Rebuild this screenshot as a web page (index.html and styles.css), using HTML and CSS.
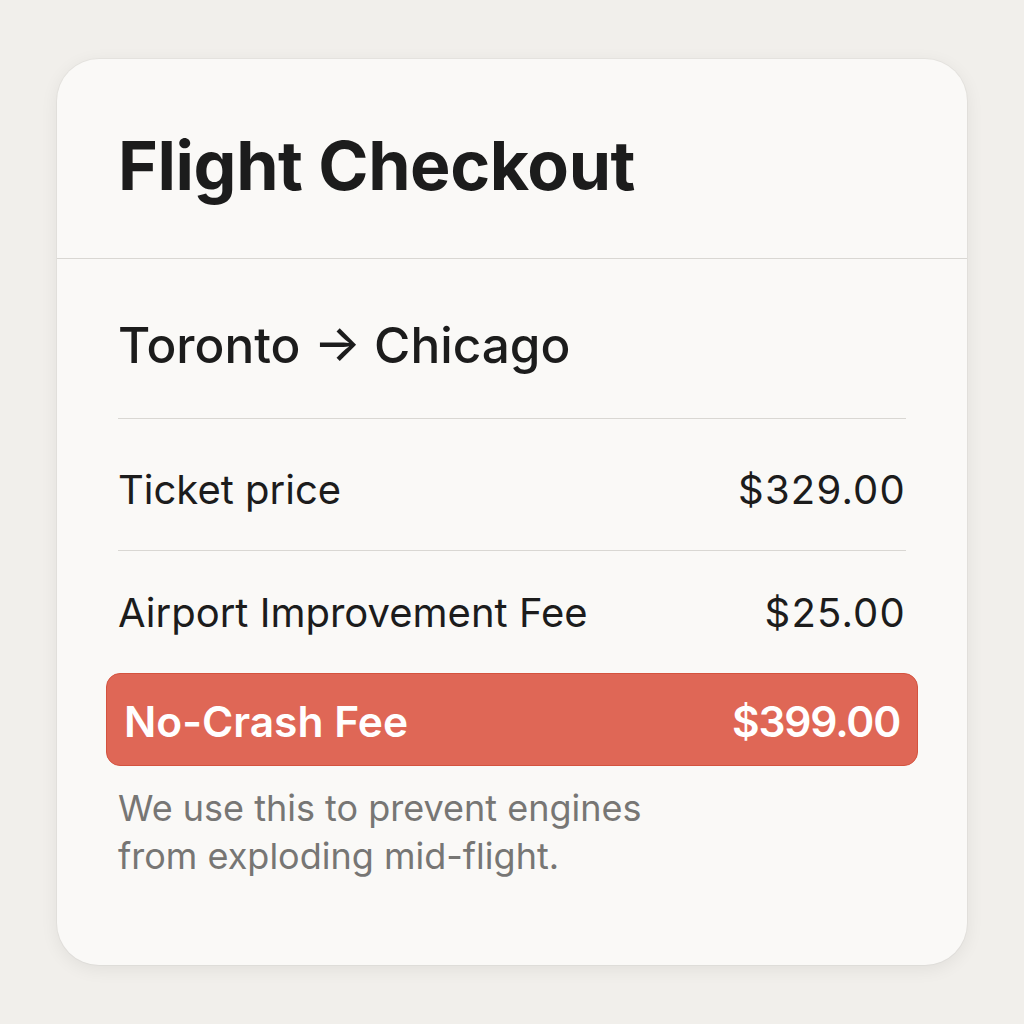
FILE: index.html
```html
<!DOCTYPE html>
<html lang="en">
<head>
<meta charset="utf-8">
<title>Flight Checkout</title>
<link rel="stylesheet" href="styles.css">
</head>
<body>
<main class="card">
  <header class="card-header">
    <h1 class="title">Flight Checkout</h1>
  </header>
  <section class="card-body">
    <h2 class="route">Toronto → Chicago</h2>
    <div class="row row-first">
      <span class="label">Ticket price</span>
      <span class="amount">$329.00</span>
    </div>
    <div class="row">
      <span class="label">Airport Improvement Fee</span>
      <span class="amount">$25.00</span>
    </div>
    <div class="row-alert">
      <span class="label">No-Crash Fee</span>
      <span class="amount">$399.00</span>
    </div>
    <p class="note">We use this to prevent engines<br>from exploding mid-flight.</p>
  </section>
</main>
</body>
</html>
```
FILE: styles.css
```css
html, body {
  margin: 0;
  padding: 0;
}
body {
  width: 1024px;
  height: 1024px;
  background: #f1efeb;
  font-family: "Inter", "Liberation Sans", sans-serif;
  color: #1c1c1c;
  display: flex;
  justify-content: center;
  padding-top: 59px;
  box-sizing: border-box;
}
.card {
  width: 910px;
  height: 906px;
  background: #faf9f7;
  border-radius: 42px;
  box-shadow: 0 4px 18px rgba(0,0,0,0.07), 0 0 0 1px rgba(0,0,0,0.03);
  box-sizing: border-box;
}
.card-header {
  height: 200px;
  border-bottom: 1.5px solid #d9d7d3;
  padding: 0 61px;
  display: flex;
  align-items: center;
  box-sizing: border-box;
}
.title {
  margin: 0;
  font-size: 68px;
  font-weight: 700;
  letter-spacing: -0.4px;
  padding-top: 12px;
}
.card-body {
  padding: 0 61px;
}
.route {
  margin: 0;
  font-size: 49.5px;
  font-weight: 500;
  height: 160px;
  display: flex;
  align-items: center;
  padding-top: 12px;
  box-sizing: border-box;
  border-bottom: 1.5px solid #d9d7d3;
}
.row {
  display: flex;
  justify-content: space-between;
  align-items: center;
  font-size: 40px;
  height: 132px;
  box-sizing: border-box;
  padding-top: 10px;
}
.row .amount {
  letter-spacing: 1.2px;
}
.row-first {
  border-bottom: 1.5px solid #d9d7d3;
}
.row + .row {
  height: 122px;
  padding-top: 0;
}
.row-alert {
  margin: 0 -12px;
  height: 93px;
  background: #df6756;
  border: 1px solid #d4533f;
  border-radius: 14px;
  color: #fff;
  font-weight: 600;
  font-size: 42.5px;
  display: flex;
  justify-content: space-between;
  align-items: center;
  padding: 4px 17px 0;
  box-sizing: border-box;
}
.row-alert .amount {
  letter-spacing: -1.2px;
}
.note {
  margin: 18px 0 0;
  font-size: 36px;
  line-height: 48px;
  color: #777674;
}
```
